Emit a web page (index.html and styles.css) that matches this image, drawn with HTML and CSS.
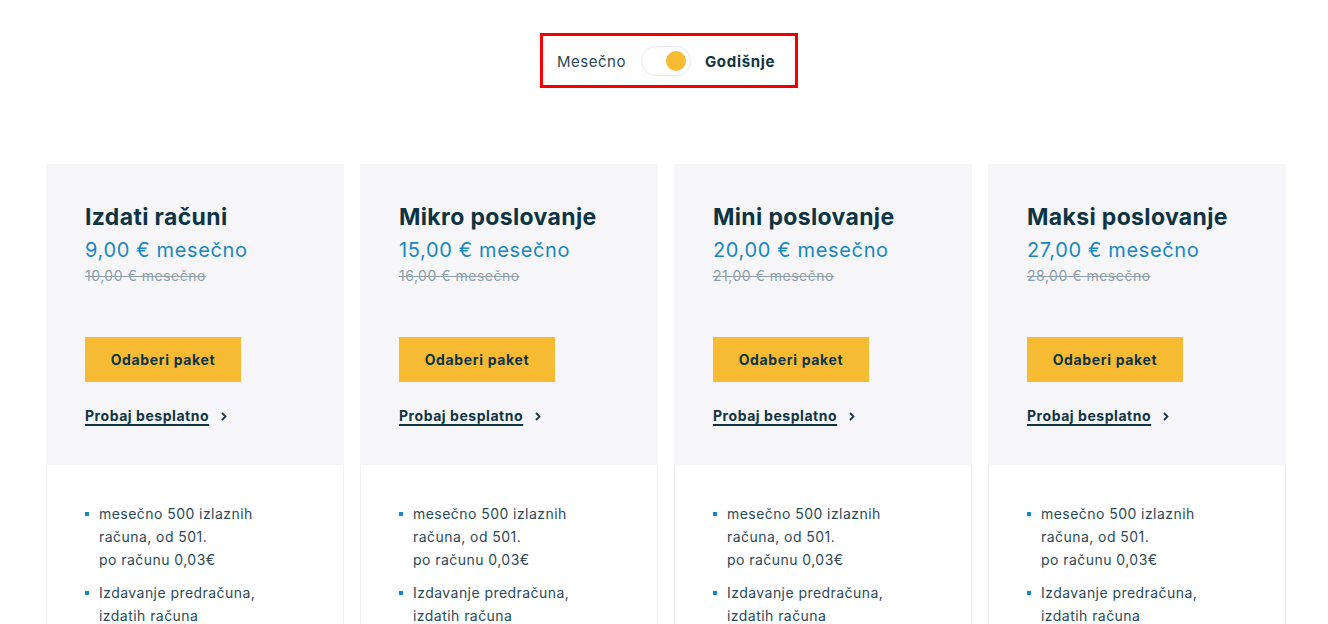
FILE: index.html
```html
<!DOCTYPE html>
<html lang="sr">
<head>
<meta charset="utf-8">
<title>Paketi</title>
<link rel="stylesheet" href="styles.css">
</head>
<body>
<div class="switch-row">
  <div class="switch-box">
    <span class="switch-label">Mesečno</span>
    <span class="pill"><span class="knob"></span></span>
    <span class="switch-label active">Godišnje</span>
  </div>
</div>

<div class="plans">
  <div class="card">
    <div class="card-top">
      <h2 class="title">Izdati računi</h2>
      <div class="price">9,00 € mesečno</div>
      <div class="old-price">10,00 € mesečno</div>
      <a class="btn">Odaberi paket</a>
      <a class="trial"><span class="trial-text">Probaj besplatno</span><svg class="chev" width="6" height="9" viewBox="0 0 6 9"><path d="M1 1l3.5 3.5L1 8" fill="none" stroke="#17394a" stroke-width="1.8"/></svg></a>
    </div>
    <ul class="features">
      <li>mesečno 500 izlaznih računa, od 501.<br>po računu 0,03€</li>
      <li>Izdavanje predračuna, izdatih računa</li>
    </ul>
  </div>

  <div class="card">
    <div class="card-top">
      <h2 class="title">Mikro poslovanje</h2>
      <div class="price">15,00 € mesečno</div>
      <div class="old-price">16,00 € mesečno</div>
      <a class="btn">Odaberi paket</a>
      <a class="trial"><span class="trial-text">Probaj besplatno</span><svg class="chev" width="6" height="9" viewBox="0 0 6 9"><path d="M1 1l3.5 3.5L1 8" fill="none" stroke="#17394a" stroke-width="1.8"/></svg></a>
    </div>
    <ul class="features">
      <li>mesečno 500 izlaznih računa, od 501.<br>po računu 0,03€</li>
      <li>Izdavanje predračuna, izdatih računa</li>
    </ul>
  </div>

  <div class="card">
    <div class="card-top">
      <h2 class="title">Mini poslovanje</h2>
      <div class="price">20,00 € mesečno</div>
      <div class="old-price">21,00 € mesečno</div>
      <a class="btn">Odaberi paket</a>
      <a class="trial"><span class="trial-text">Probaj besplatno</span><svg class="chev" width="6" height="9" viewBox="0 0 6 9"><path d="M1 1l3.5 3.5L1 8" fill="none" stroke="#17394a" stroke-width="1.8"/></svg></a>
    </div>
    <ul class="features">
      <li>mesečno 500 izlaznih računa, od 501.<br>po računu 0,03€</li>
      <li>Izdavanje predračuna, izdatih računa</li>
    </ul>
  </div>

  <div class="card">
    <div class="card-top">
      <h2 class="title">Maksi poslovanje</h2>
      <div class="price">27,00 € mesečno</div>
      <div class="old-price">28,00 € mesečno</div>
      <a class="btn">Odaberi paket</a>
      <a class="trial"><span class="trial-text">Probaj besplatno</span><svg class="chev" width="6" height="9" viewBox="0 0 6 9"><path d="M1 1l3.5 3.5L1 8" fill="none" stroke="#17394a" stroke-width="1.8"/></svg></a>
    </div>
    <ul class="features">
      <li>mesečno 500 izlaznih računa, od 501.<br>po računu 0,03€</li>
      <li>Izdavanje predračuna, izdatih računa</li>
    </ul>
  </div>
</div>
</body>
</html>
```

FILE: styles.css
```css
* { box-sizing: border-box; }

html, body {
  margin: 0;
  padding: 0;
  background: #ffffff;
  font-family: Inter, "Open Sans", "Liberation Sans", sans-serif;
  color: #0f3443;
  height: 624px;
  overflow: hidden;
}

.switch-row {
  display: flex;
  padding-top: 33px;
  padding-left: 540px;
}

.switch-box {
  display: flex;
  align-items: center;
  width: 258px;
  height: 55px;
  border: 3px solid #f20000;
  padding-left: 14px;
  padding-top: 1px;
}

.switch-label {
  font-size: 15px;
  color: #2a4755;
  letter-spacing: 0.5px;
}

.switch-label.active {
  font-weight: 700;
  color: #0f3443;
  letter-spacing: 0.7px;
}

.pill {
  display: flex;
  align-items: center;
  justify-content: flex-end;
  width: 50px;
  height: 30px;
  margin: -1px 14px 0 15px;
  border: 1px solid #e6e6ef;
  border-radius: 15px;
  background: #fff;
  padding-right: 4px;
}

.knob {
  width: 20px;
  height: 20px;
  border-radius: 50%;
  background: #f6bb33;
}

.plans {
  display: grid;
  grid-template-columns: repeat(4, 298px);
  gap: 16px;
  margin: 76px 0 0 46px;
}

.card {
  border-left: 1px solid #f1f1f4;
  border-right: 1px solid #f1f1f4;
  background: #fff;
}

.card-top {
  background: #f6f6f8;
  padding: 39px 20px 39px 39px;
  display: flex;
  flex-direction: column;
  align-items: flex-start;
  margin: 0 -1px;
}

.title {
  margin: 0;
  font-size: 23px;
  line-height: 28px;
  font-weight: 700;
  color: #0d3443;
  letter-spacing: 0.35px;
}

.price {
  margin-top: 6px;
  font-size: 20px;
  line-height: 26px;
  color: #1788bf;
  letter-spacing: 0.65px;
}

.old-price {
  margin-top: 3px;
  font-size: 14px;
  line-height: 20px;
  color: #8d9ea8;
  text-decoration: line-through;
  letter-spacing: 0.5px;
}

.btn {
  display: flex;
  align-items: center;
  justify-content: center;
  margin-top: 51px;
  width: 156px;
  height: 45px;
  background: #f6bb33;
  font-size: 14px;
  font-weight: 700;
  color: #0f3443;
  letter-spacing: 0.65px;
}

.trial {
  display: flex;
  align-items: center;
  margin-top: 24px;
  font-size: 14px;
  line-height: 20px;
  font-weight: 700;
  color: #0f3443;
  letter-spacing: 0.55px;
}

.trial-text {
  text-decoration: underline;
  text-underline-offset: 3px;
  text-decoration-thickness: 1.5px;
}

.chev {
  margin-left: 12px;
}

.features {
  list-style: none;
  margin: 0;
  padding: 37px 20px 0 38px;
}

.features li {
  position: relative;
  padding-left: 14px;
  max-width: 185px;
  font-size: 14px;
  line-height: 23px;
  color: #2a4a57;
  margin-bottom: 10px;
  letter-spacing: 0.45px;
}

.features li::before {
  content: "";
  position: absolute;
  left: 0;
  top: 10px;
  width: 4px;
  height: 4px;
  background: #1788bf;
}
```
